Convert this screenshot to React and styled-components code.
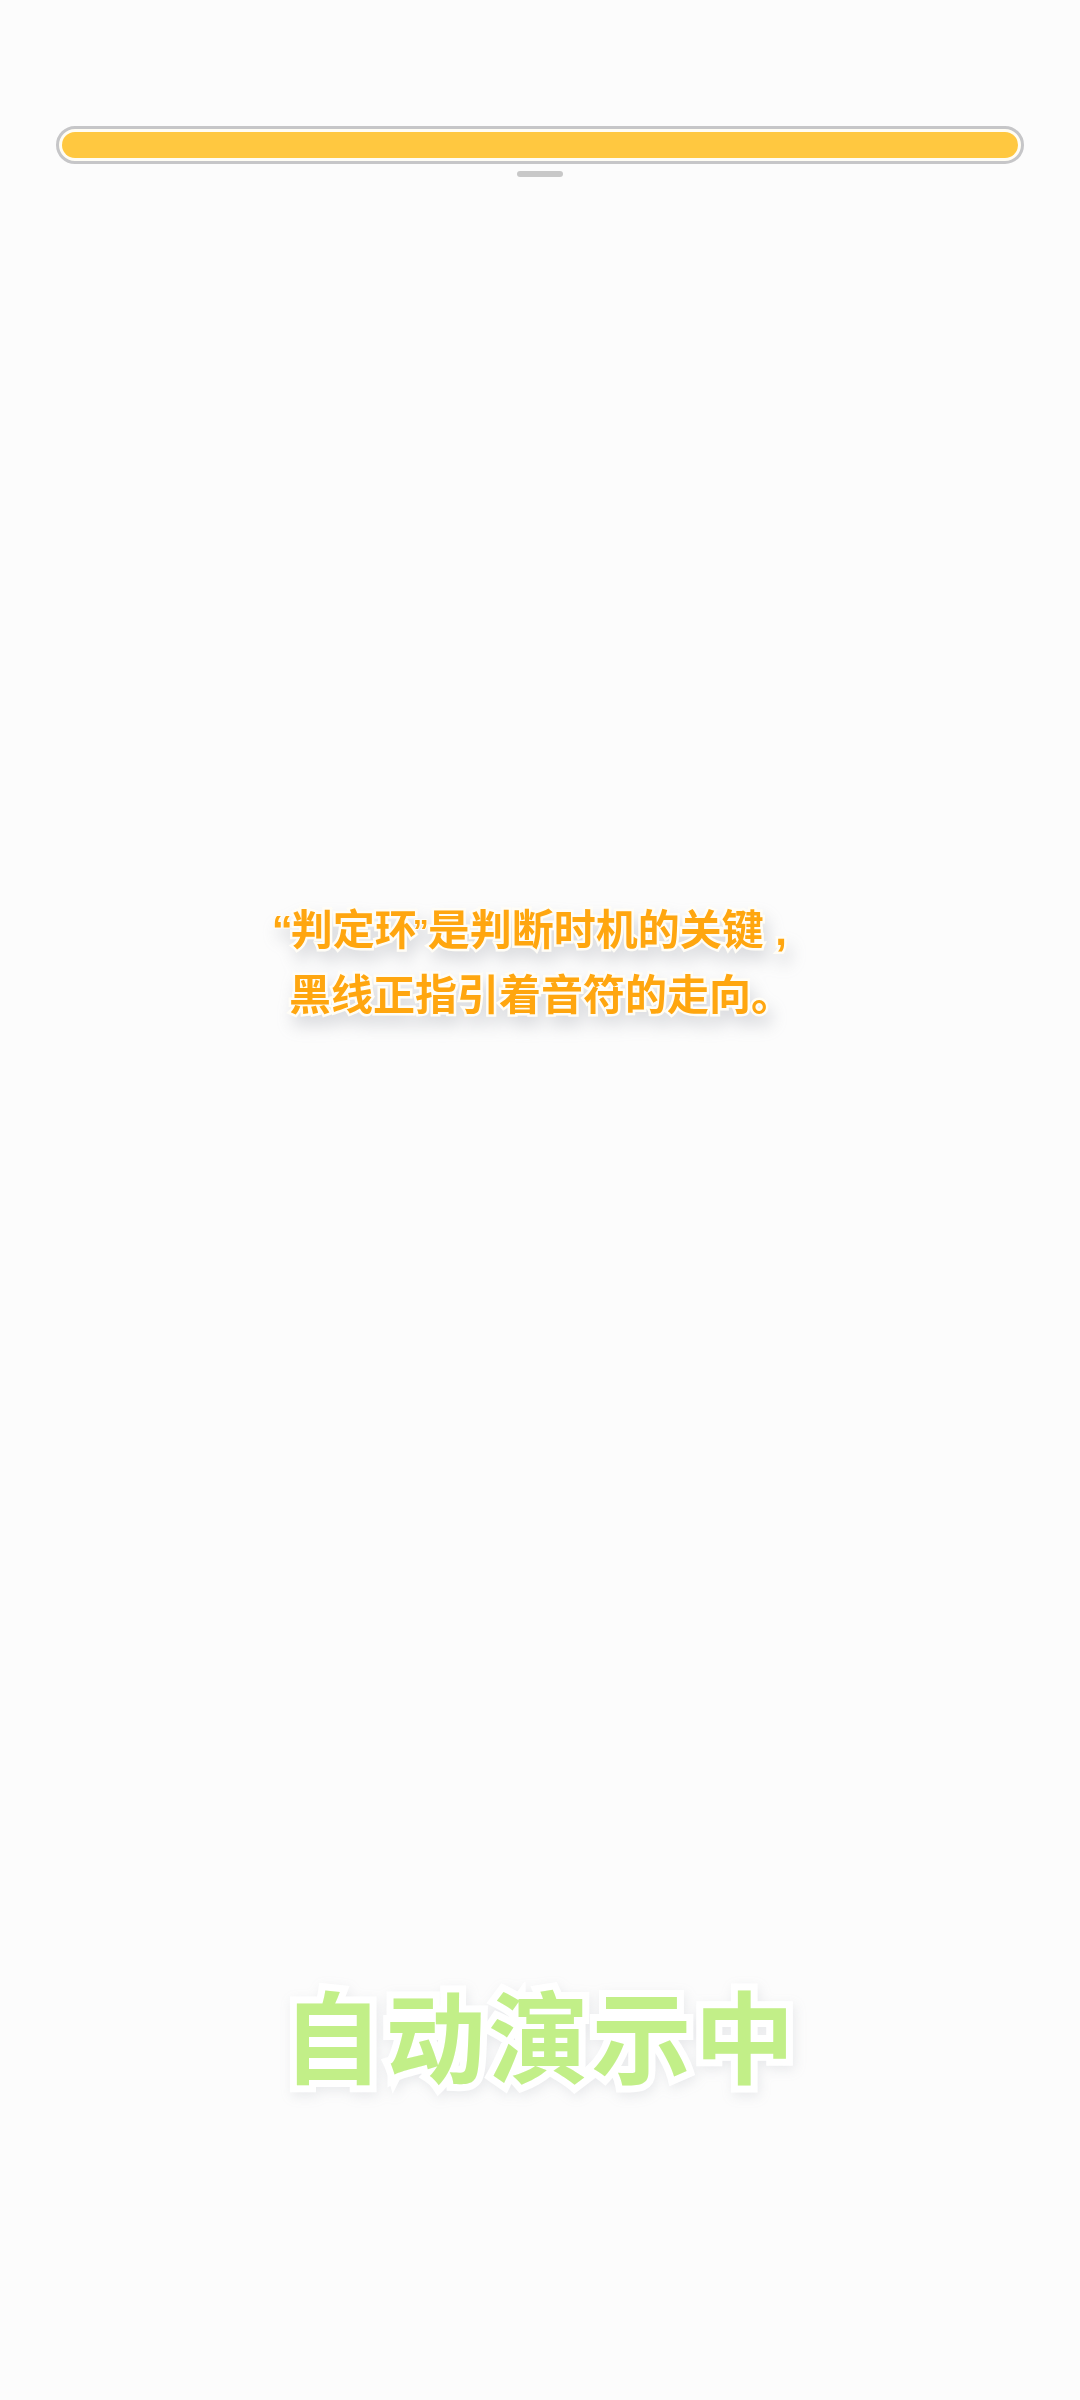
import styled, { createGlobalStyle, css } from 'styled-components';

const GlobalStyle = createGlobalStyle`
  html, body {
    margin: 0;
    padding: 0;
    background: #fcfcfc;
  }
`;

const Screen = styled.div`
  width: 1080px;
  height: 2400px;
  display: flex;
  flex-direction: column;
  align-items: center;
  background: #fcfcfc;
  font-family: 'Liberation Sans', 'Noto Sans CJK SC', sans-serif;
  overflow: hidden;
`;

const Track = styled.div`
  box-sizing: border-box;
  width: 968px;
  height: 38px;
  margin-top: 126px;
  padding: 3px;
  border: 3px solid #c6c6c8;
  border-radius: 19px;
  background: #fffdf4;
`;

const Fill = styled.div`
  height: 100%;
  border-radius: 13px;
  background: #ffc840;
`;

const Handle = styled.div`
  width: 46px;
  height: 6px;
  margin-top: 7px;
  border-radius: 3px;
  background: #c8c8c8;
`;

const Caption = styled.div`
  margin-top: 721px;
  padding-left: 2px;
  font-size: 42px;
  font-weight: 700;
  line-height: 65px;
  text-align: center;
  white-space: pre;
  color: #ffa60f;
  -webkit-text-stroke: 5px #fffdf6;
  paint-order: stroke fill;
  filter: drop-shadow(4px 10px 8px rgba(120, 125, 140, 0.24));
`;

// the closing quote sits tight against the next glyph, so it paints above that glyph's outline
const Quote = styled.span`
  position: relative;
  z-index: 1;
  letter-spacing: -2px;
  -webkit-text-stroke: 2px #fffdf6;
  ${({ $close }) =>
    $close &&
    css`
      top: -3px;
      margin-left: -4px;
      font-size: 32px;
      line-height: 0;
      letter-spacing: -1px;
    `}
`;

const Status = styled.div`
  margin-top: 948px;
  font-size: 100px;
  font-weight: 700;
  line-height: 130px;
  letter-spacing: 3px;
  color: #c2ef88;
  -webkit-text-stroke: 14px #ffffff;
  paint-order: stroke fill;
  filter: drop-shadow(2px 4px 6px rgba(120, 125, 140, 0.14));
`;

const App = () => {
  return (
    <>
      <GlobalStyle />
      <Screen>
        <Track>
          <Fill />
        </Track>
        <Handle />
        <Caption>
          <Quote>“</Quote>判定环<Quote $close>”</Quote>
          {'是判断时机的关键 ,\u00a0\u00a0'}
          <br />
          黑线正指引着音符的走向。
        </Caption>
        <Status>自动演示中</Status>
      </Screen>
    </>
  );
};

export default App;
